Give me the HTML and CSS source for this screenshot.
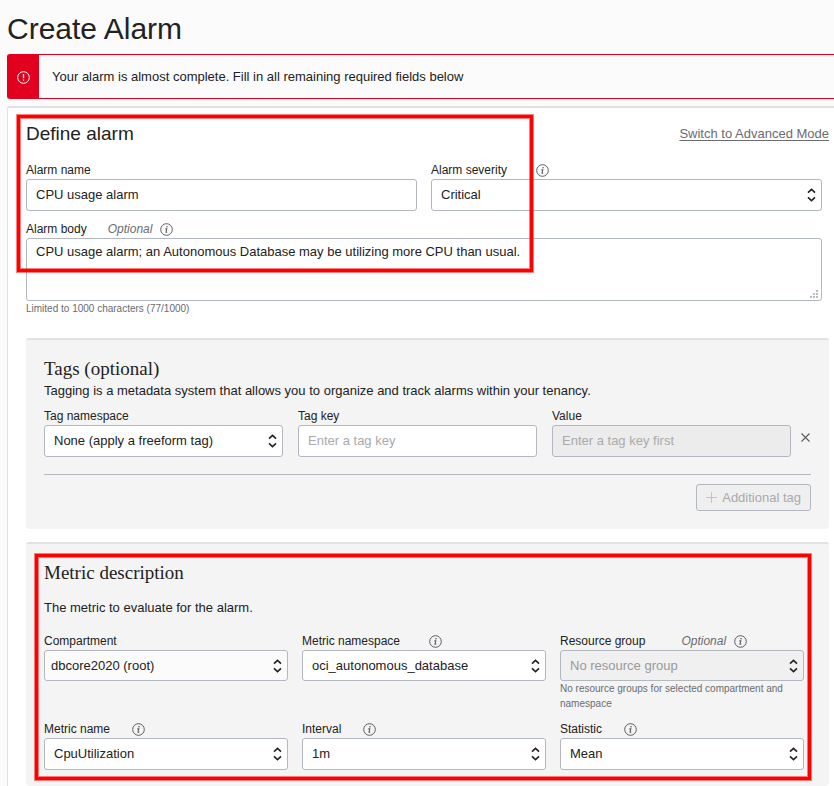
FILE: index.html
```html
<!DOCTYPE html>
<html lang="en">
<head>
<meta charset="utf-8">
<meta name="viewport" content="width=device-width, initial-scale=1">
<title>Create Alarm</title>
<link rel="stylesheet" href="styles.css">
</head>
<body>
<svg class="defs" aria-hidden="true">
  <symbol id="info" viewBox="0 0 13 13">
    <circle cx="6.5" cy="6.5" r="5.8" fill="none" stroke="currentColor"/>
    <circle cx="7" cy="3.8" r=".8" fill="currentColor"/>
    <path d="M5.3 5.9h1.5L6 9.2h1.3" fill="none" stroke="currentColor" stroke-width="1.1"/>
  </symbol>
  <symbol id="arrows" viewBox="0 0 9 14">
    <path d="M1 4.7 4.5 1.4 8 4.7M1 9.3l3.5 3.3L8 9.3" fill="none" stroke="currentColor" stroke-width="1.6"/>
  </symbol>
</svg>
<main class="page">
  <h1>Create Alarm</h1>
  <div class="alert" role="alert">
    <span class="alert-mark">
      <svg width="13" height="13" viewBox="0 0 13 13" aria-hidden="true"><circle cx="6.5" cy="6.5" r="5.8" fill="none" stroke="currentColor"/><path d="M6.5 3v4.3M6.5 8.5v1.3" stroke="currentColor" stroke-width="1.3"/></svg>
    </span>
    <p>Your alarm is almost complete. Fill in all remaining required fields below</p>
  </div>

  <form class="panel">
    <section class="define">
      <div class="section-head">
        <h2>Define alarm</h2>
        <a href="#">Switch to Advanced Mode</a>
      </div>
      <div class="fields">
        <div class="grid two">
          <div>
            <div class="label-row"><label for="name">Alarm name</label></div>
            <input class="control" id="name" type="text" value="CPU usage alarm">
          </div>
          <div>
            <div class="label-row"><label for="severity">Alarm severity</label><svg class="info far"><use href="#info"/></svg></div>
            <div class="select"><select class="control" id="severity"><option>Critical</option></select><svg><use href="#arrows"/></svg></div>
          </div>
        </div>
        <div class="body-field">
          <div class="label-row"><label for="body">Alarm body</label><em>Optional</em><svg class="info near"><use href="#info"/></svg></div>
          <div class="area">
            <textarea class="control" id="body">CPU usage alarm; an Autonomous Database may be utilizing more CPU than usual.</textarea>
            <svg viewBox="0 0 8 8" aria-hidden="true"><path d="M0 6h2v2H0zM3 6h2v2H3zM6 6h2v2H6zM3 3h2v2H3zM6 3h2v2H6zM6 0h2v2H6z" fill="currentColor"/></svg>
          </div>
          <p class="hint">Limited to 1000 characters (77/1000)</p>
        </div>
      </div>
      <div class="highlight highlight-define"></div>
    </section>

    <section class="card">
      <h3>Tags (optional)</h3>
      <p>Tagging is a metadata system that allows you to organize and track alarms within your tenancy.</p>
      <div class="tag-row">
        <div>
          <div class="label-row"><label for="tag-ns">Tag namespace</label></div>
          <div class="select"><select class="control" id="tag-ns"><option>None (apply a freeform tag)</option></select><svg><use href="#arrows"/></svg></div>
        </div>
        <div>
          <div class="label-row"><label for="tag-key">Tag key</label></div>
          <input class="control" id="tag-key" type="text" placeholder="Enter a tag key">
        </div>
        <div>
          <div class="label-row"><label for="tag-value">Value</label></div>
          <input class="control" id="tag-value" type="text" placeholder="Enter a tag key first" disabled>
        </div>
        <button class="remove" type="button" aria-label="Remove tag"><svg width="9" height="9" viewBox="0 0 9 9"><path d="m.5.5 8 8m0-8-8 8" stroke="currentColor" stroke-width="1.1"/></svg></button>
      </div>
      <div class="tag-foot">
        <button class="add" type="button" disabled><svg width="11" height="11" viewBox="0 0 11 11" aria-hidden="true"><path d="M5.5 0v11M0 5.5h11" stroke="currentColor"/></svg>Additional tag</button>
      </div>
    </section>

    <section class="card metric">
      <h3>Metric description</h3>
      <p>The metric to evaluate for the alarm.</p>
      <div class="grid three">
        <div>
          <div class="label-row"><label for="compartment">Compartment</label></div>
          <div class="select tree"><select class="control short" id="compartment"><option>dbcore2020 (root)</option></select><svg><use href="#arrows"/></svg></div>
        </div>
        <div>
          <div class="label-row"><label for="metric-ns">Metric namespace</label><svg class="info far"><use href="#info"/></svg></div>
          <div class="select"><select class="control short" id="metric-ns"><option>oci_autonomous_database</option></select><svg><use href="#arrows"/></svg></div>
        </div>
        <div>
          <div class="label-row"><label for="group">Resource group</label><em class="far">Optional</em><svg class="info near"><use href="#info"/></svg></div>
          <div class="select"><select class="control short" id="group" disabled><option>No resource group</option></select><svg><use href="#arrows"/></svg></div>
          <p class="hint">No resource groups for selected compartment and namespace</p>
        </div>
        <div>
          <div class="label-row"><label for="metric">Metric name</label><svg class="info"><use href="#info"/></svg></div>
          <div class="select"><select class="control" id="metric"><option>CpuUtilization</option></select><svg><use href="#arrows"/></svg></div>
        </div>
        <div>
          <div class="label-row"><label for="interval">Interval</label><svg class="info"><use href="#info"/></svg></div>
          <div class="select"><select class="control" id="interval"><option>1m</option></select><svg><use href="#arrows"/></svg></div>
        </div>
        <div>
          <div class="label-row"><label for="statistic">Statistic</label><svg class="info"><use href="#info"/></svg></div>
          <div class="select"><select class="control" id="statistic"><option>Mean</option></select><svg><use href="#arrows"/></svg></div>
        </div>
      </div>
      <div class="highlight highlight-metric"></div>
    </section>
  </form>
</main>
</body>
</html>
```
FILE: styles.css
```css
* { box-sizing: border-box; }

body {
  margin: 0;
  background: #fbfbfb;
  color: #222;
  font: 13px/22px "Liberation Sans", Arial, sans-serif;
}

h1, h2, h3, p { margin: 0; font-weight: 400; }
.defs { position: absolute; width: 0; height: 0; }
.page { padding: 11px 0 0 7px; }

h1 { font-size: 30px; line-height: 36px; margin-bottom: 7px; }
h2 { font-size: 19px; line-height: 24px; }
h3 { font: 19px/22px "Liberation Serif", "Times New Roman", serif; }

.alert {
  display: flex;
  align-items: center;
  height: 45px;
  border: 1px solid #e3001f;
  border-right: 0;
  border-radius: 3px 0 0 3px;
  margin-bottom: 7px;
}
.alert-mark {
  display: flex;
  align-items: center;
  justify-content: center;
  align-self: stretch;
  width: 31px;
  margin-right: 13px;
  padding-top: 1px;
  background: #e3001f;
  color: #fff;
}

.panel {
  padding: 14px 5px 0 18px;
  border-top: 2px solid #e1e1e6;
  border-left: 1px solid #e1e1e6;
  border-radius: 3px 0 0 0;
  background: #fff;
}

.define { position: relative; margin-bottom: 22px; }
.section-head {
  display: flex;
  align-items: center;
  justify-content: space-between;
  margin-bottom: 16px;
}
.section-head a { color: #6b6b70; text-decoration: underline; text-underline-offset: 2px; }
.fields { padding-right: 7px; }

.grid { display: grid; gap: 10px 14px; }
.two { grid-template-columns: 1fr 1fr; }
.three { grid-template-columns: 1fr 1fr 1fr; }
.body-field { margin-top: 10px; }

.label-row {
  display: flex;
  align-items: center;
  height: 17px;
  font-size: 12px;
  line-height: 17px;
}
.label-row em { margin-left: 21px; color: #6b6b70; }
.label-row em.far { margin-left: 36px; }
.info { width: 13px; height: 13px; margin-left: 22px; color: #5c5c60; }
.info.near { margin-left: 8px; }
.info.far { margin-left: 29px; }

.control {
  display: block;
  width: 100%;
  height: 32px;
  margin: 0;
  padding: 0 9px;
  border: 1px solid #b3b7c0;
  border-radius: 3px;
  background: #fff;
  color: #222;
  font: inherit;
  appearance: none;
  opacity: 1;
}
input.control { padding-bottom: 2px; }
.control.short { height: 31px; }
.control::placeholder { color: #aaaaad; opacity: 1; }
.control:disabled { background: #ececec; color: #99999c; }

.select { position: relative; }
.select svg {
  position: absolute;
  top: 9px;
  right: 6px;
  width: 9px;
  height: 14px;
  pointer-events: none;
}
.select.tree .control { padding-left: 6px; background: #fbfbfb; }
.select .control:disabled { background: #f0f0f0; }

.area { position: relative; }
.area .control { height: 63px; padding: 2px 9px; resize: none; }
.area svg {
  position: absolute;
  right: 4px;
  bottom: 3px;
  width: 8px;
  height: 8px;
  color: #bbb;
}

.hint { color: #6b6b70; font-size: 10px; line-height: 15px; }

.card {
  padding: 18px;
  border-top: 2px solid #e1e1e6;
  border-radius: 3px;
  background: #f4f4f4;
}
.tag-row {
  display: grid;
  grid-template-columns: 1fr 1fr 1fr auto;
  column-gap: 15px;
  margin-top: 6px;
  padding-bottom: 17px;
  border-bottom: 1px solid #b3b7c0;
}
.remove {
  align-self: start;
  width: 9px;
  height: 9px;
  margin: 25px 1px 0 -5px;
  padding: 0;
  border: 0;
  background: none;
  color: #5c5c60;
}
.remove svg { display: block; }
.tag-foot { display: flex; justify-content: flex-end; padding-top: 9px; }
.add {
  display: flex;
  align-items: center;
  gap: 5px;
  height: 27px;
  padding: 0 9px;
  border: 1px solid #b3b7c0;
  border-radius: 3px;
  background: #efefef;
  color: #aaaaad;
  font: inherit;
}
.add svg { color: #c4c4c7; }

.metric { position: relative; margin-top: 13px; padding: 18px 25px 16px 18px; }
.metric p { margin-top: 13px; }
.metric .hint { margin-top: 0; }
.metric .grid { margin-top: 14px; }

.highlight {
  position: absolute;
  border: 3px solid #f00;
  box-shadow: 0 0 0 1px rgb(255 0 0 / 50%), inset 0 0 0 1px rgb(255 0 0 / 50%);
  pointer-events: none;
}
.highlight-define { top: -7px; left: -9px; width: 516px; height: 157px; }
.highlight-metric { top: 10px; right: 18px; bottom: 6px; left: 9px; }
```
